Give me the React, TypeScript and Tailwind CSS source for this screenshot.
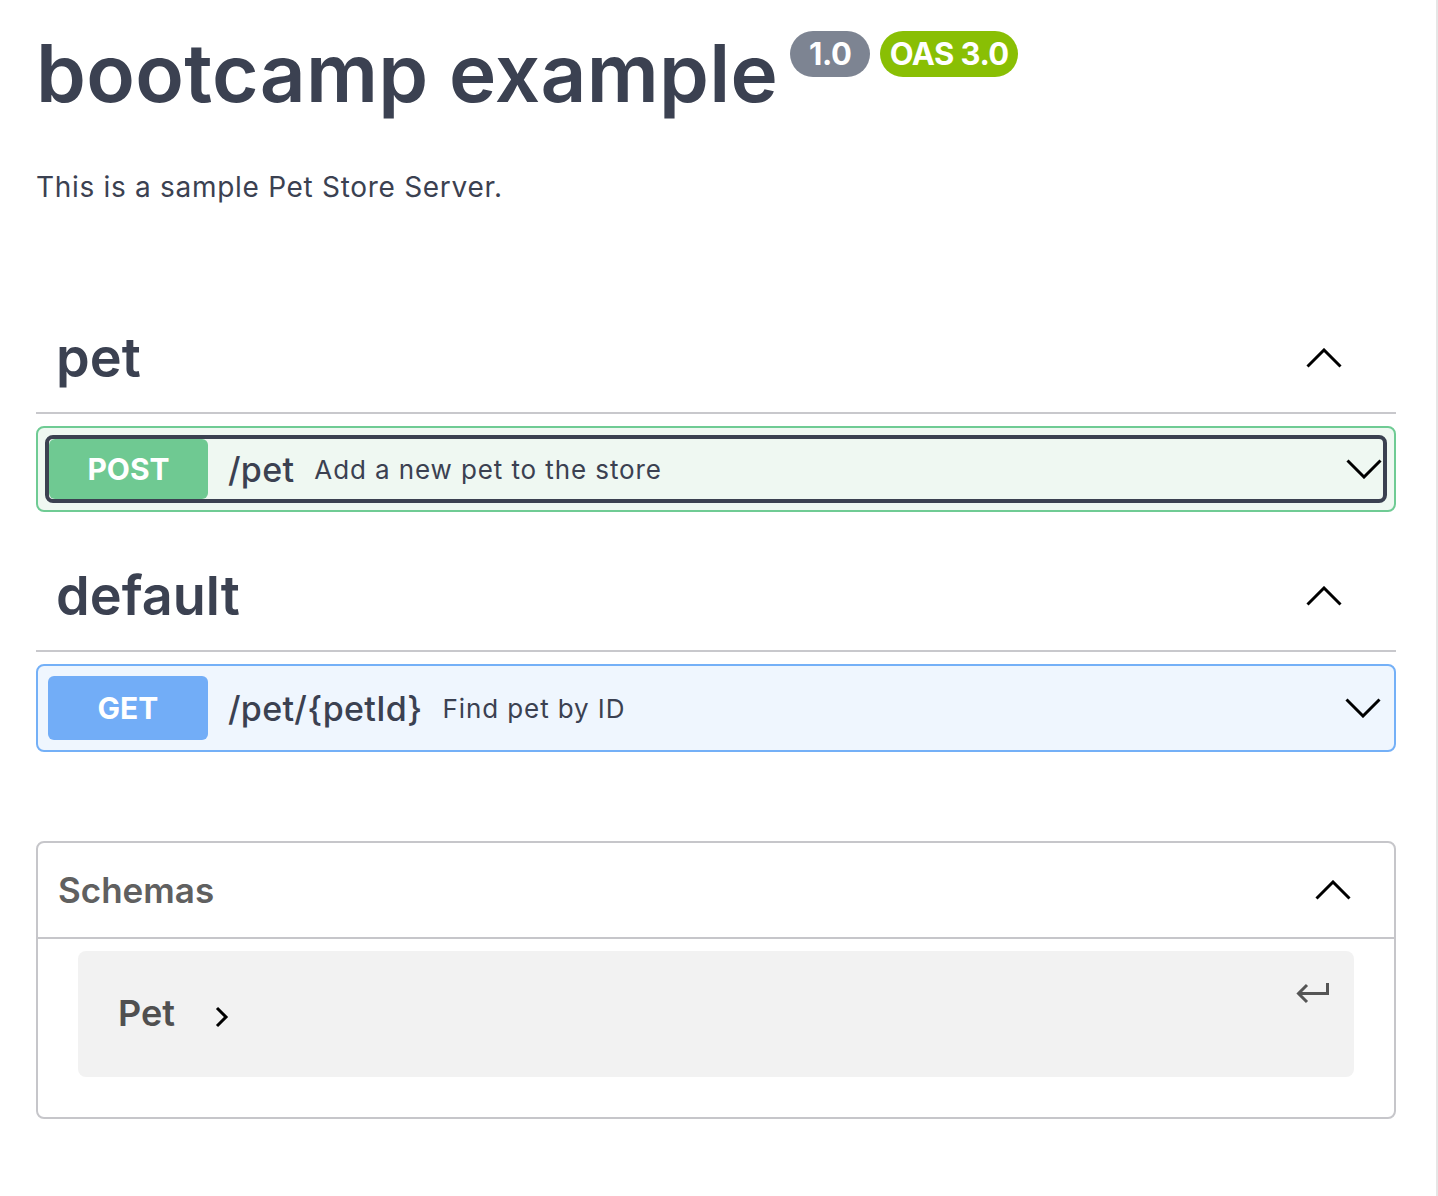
import React from "react";

const font = { fontFamily: 'Inter, "Noto Sans", "Liberation Sans", sans-serif' };

function ChevronUp({ className = "" }: { className?: string }) {
  return (
    <svg width="36" height="20" viewBox="0 0 36 20" className={className}>
      <polyline points="1.5,18.5 18,2 34.5,18.5" fill="none" stroke="#000" strokeWidth="3" />
    </svg>
  );
}

function ChevronDown({ className = "" }: { className?: string }) {
  return (
    <svg width="36" height="20" viewBox="0 0 36 20" className={className}>
      <polyline points="1.5,1.5 18,18 34.5,1.5" fill="none" stroke="#000" strokeWidth="3" />
    </svg>
  );
}

function TagHeader({ title }: { title: string }) {
  return (
    <div className="flex h-[110px] items-center justify-between border-b-2 border-[#c8c8cc] pl-[20px] pr-[54px]">
      <h3 className="text-[54px] font-semibold leading-none text-[#3b4151]">{title}</h3>
      <ChevronUp />
    </div>
  );
}

export default function App() {
  return (
    <div className="min-h-[1196px] w-[1438px] bg-white" style={font}>
      <div className="flex">
        <div className="w-[1436px] pl-[36px] pr-[40px]">
          {/* Title */}
          <div className="flex items-start pt-[28px]">
            <h2 className="mt-[5px] text-[80px] font-semibold leading-none tracking-[0.3px] text-[#3b4151]">
              bootcamp example
            </h2>
            <div className="ml-[12px] mt-[3px] flex gap-[10px]">
              <span className="flex h-[46px] w-[80px] items-center justify-center rounded-full bg-[#7d8492] text-[31px] font-bold tracking-[-0.5px] text-white">
                1.0
              </span>
              <span className="flex h-[46px] w-[138px] items-center justify-center rounded-full bg-[#89bf04] text-[31px] font-bold tracking-[-0.5px] text-white">
                OAS 3.0
              </span>
            </div>
          </div>
          <p className="mt-[54px] text-[28px] leading-[40px] tracking-[0.7px] text-[#3b4151]">
            This is a sample Pet Store Server.
          </p>

          {/* pet tag */}
          <div className="mt-[97px]">
            <TagHeader title="pet" />
            <div className="mt-[12px] rounded-[8px] border-2 border-[#6fcb94] bg-[#eff8f2] p-[7px]">
              <div className="flex items-center rounded-[8px] border-4 border-[#3b4151]">
                <span className="flex h-[60px] w-[159px] items-center justify-center rounded-[6px] bg-[#6fc992] text-[30px] font-bold text-white">
                  POST
                </span>
                <span className="ml-[20px] text-[34px] font-medium tracking-[0.3px] text-[#3b4151]">/pet</span>
                <span className="ml-[20px] flex-1 text-[26px] tracking-[0.9px] text-[#3b4151]">
                  Add a new pet to the store
                </span>
                <ChevronDown className="mr-[1px]" />
              </div>
            </div>
          </div>

          {/* default tag */}
          <div className="mt-[30px]">
            <TagHeader title="default" />
            <div className="mt-[12px] flex items-center rounded-[8px] border-2 border-[#74b0f7] bg-[#eff6fe] p-[10px]">
              <span className="flex h-[64px] w-[160px] items-center justify-center rounded-[6px] bg-[#72adf7] text-[30px] font-bold text-white">
                GET
              </span>
              <span className="ml-[20px] text-[34px] font-medium tracking-[0.3px] text-[#3b4151]">
                /pet/&#123;petId&#125;
              </span>
              <span className="ml-[20px] flex-1 text-[26px] tracking-[0.9px] text-[#3b4151]">Find pet by ID</span>
              <ChevronDown className="mr-[3px]" />
            </div>
          </div>

          {/* Schemas */}
          <div className="mt-[89px] rounded-[8px] border-2 border-[#c6c6ca]">
            <div className="flex h-[96px] items-center justify-between border-b-2 border-[#c6c6ca] pl-[20px] pr-[43px]">
              <h4 className="text-[35px] font-semibold leading-none text-[#606060]">Schemas</h4>
              <ChevronUp />
            </div>
            <div className="px-[40px] pb-[40px] pt-[12px]">
              <div className="flex h-[126px] items-start justify-between rounded-[8px] bg-[#f2f2f2] pl-[40px] pr-[24px]">
                <div className="mt-[44px] flex items-center">
                  <span className="text-[36px] font-semibold leading-none text-[#505050]">Pet</span>
                  <svg width="14" height="22" viewBox="0 0 14 22" className="ml-[40px] mt-[8px]">
                    <polyline points="2,2 11,11 2,20" fill="none" stroke="#000" strokeWidth="3" />
                  </svg>
                </div>
                <svg width="34" height="22" viewBox="0 0 34 22" className="mt-[32px]">
                  <polyline points="31.5,0 31.5,10.5 3,10.5" fill="none" stroke="#555" strokeWidth="3" />
                  <polyline points="11,2 2.5,10.5 11,19" fill="none" stroke="#555" strokeWidth="3" />
                </svg>
              </div>
            </div>
          </div>
        </div>
        <div className="min-h-[1196px] w-[2px] bg-[#e6e6e6]" />
      </div>
    </div>
  );
}
